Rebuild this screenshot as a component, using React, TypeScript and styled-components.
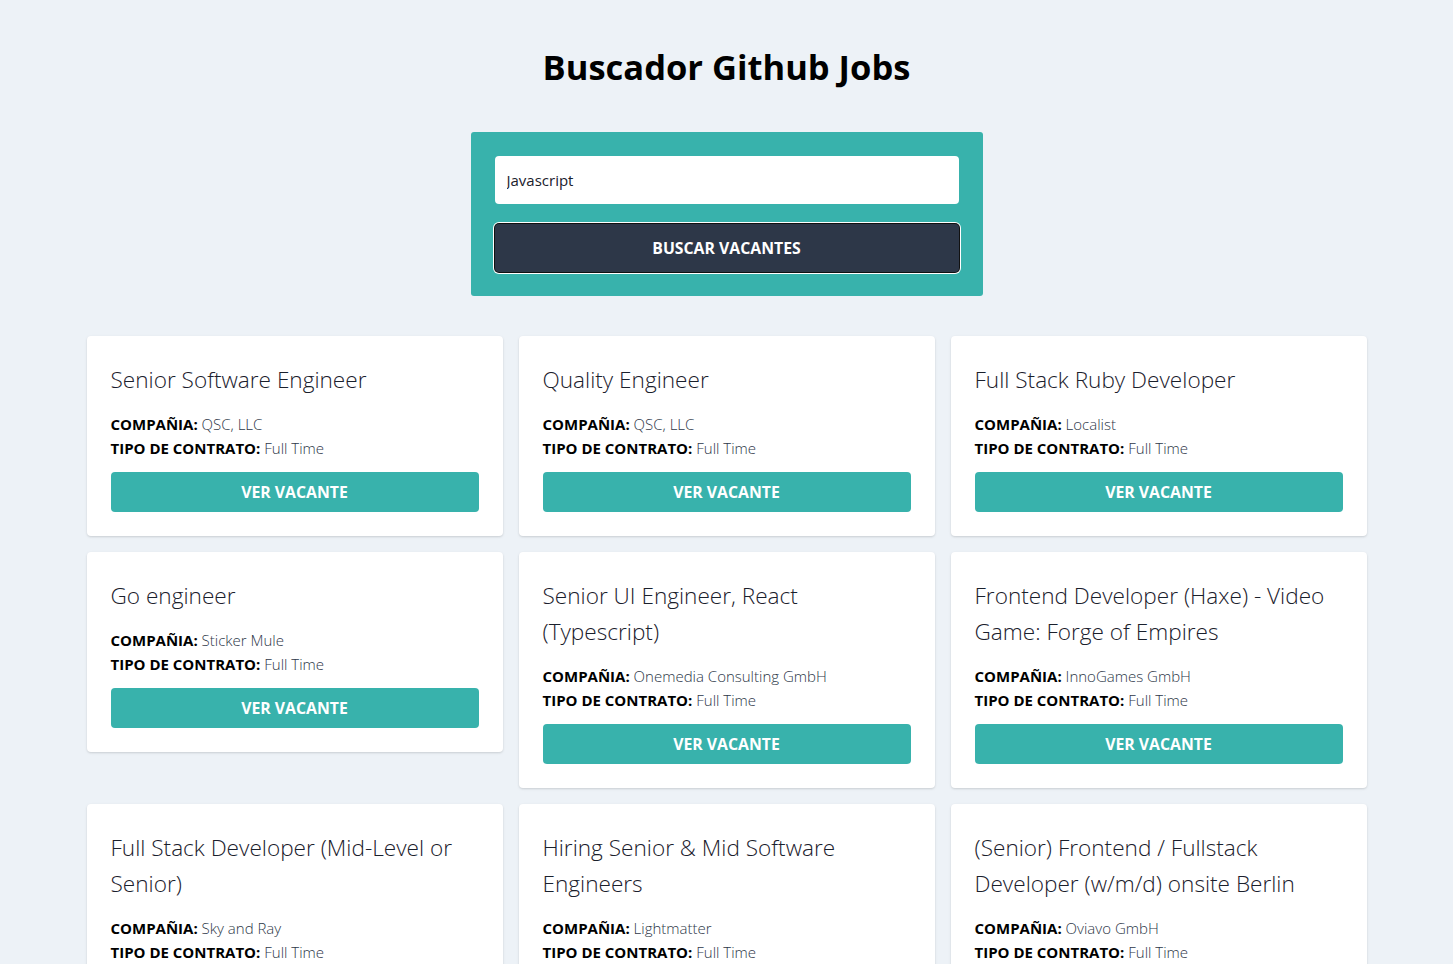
import React from "react";
import styled, { createGlobalStyle } from "styled-components";

const GlobalStyle = createGlobalStyle`
  html, body { margin: 0; padding: 0; }
  body {
    background: #edf2f7;
    font-family: "Open Sans", "Noto Sans", sans-serif;
    color: #000;
  }
  * { box-sizing: border-box; }
`;

const Page = styled.div`
  padding: 44px 0 40px;
`;

const Heading = styled.h1`
  margin: 0;
  text-align: center;
  font-size: 34.5px;
  line-height: 46px;
  font-weight: 700;
  color: #000;
`;

const SearchForm = styled.form`
  width: 512px;
  margin: 42px auto 40px;
  background: #38b2ac;
  border-radius: 3px;
  padding: 24px;
  display: flex;
  flex-direction: column;
  gap: 20px;
`;

const SearchInput = styled.input`
  width: 100%;
  height: 48px;
  border: none;
  border-radius: 4px;
  padding: 0 12px;
  font-family: inherit;
  font-size: 15px;
  color: #1a202c;
  background: #fff;
  outline: none;
`;

const SearchButton = styled.button`
  width: 100%;
  height: 48px;
  border: none;
  border-radius: 4px;
  background: #2d3748;
  color: #fff;
  font-family: inherit;
  font-weight: 700;
  font-size: 15.8px;
  text-transform: uppercase;
  box-shadow: 0 0 0 1px #111, 0 0 0 2px #fff;
  cursor: pointer;
`;

const Grid = styled.div`
  width: 1280px;
  margin: 0 auto;
  display: grid;
  grid-template-columns: repeat(3, 1fr);
  gap: 16px;
  align-items: start;
`;

const Card = styled.div`
  background: #fff;
  border-radius: 4px;
  padding: 24px;
  box-shadow: 0 1px 3px rgba(0, 0, 0, 0.1), 0 1px 2px rgba(0, 0, 0, 0.06);
`;

const JobTitle = styled.h2`
  margin: 0 0 14px;
  padding-top: 2px;
  font-size: 22.6px;
  line-height: 36px;
  font-weight: 300;
  color: #1a202c;
`;

const InfoLine = styled.p`
  margin: 0;
  font-size: 15px;
  line-height: 24px;
  font-weight: 300;
  color: #2d3748;
`;

const Label = styled.span`
  font-weight: 700;
  color: #000;
`;

const ViewButton = styled.button`
  margin-top: 12px;
  width: 100%;
  height: 40px;
  border: none;
  border-radius: 4px;
  background: #38b2ac;
  color: #fff;
  font-family: inherit;
  font-weight: 700;
  font-size: 15.8px;
  text-transform: uppercase;
  cursor: pointer;
`;

const jobs = [
  { title: "Senior Software Engineer", company: "QSC, LLC" },
  { title: "Quality Engineer", company: "QSC, LLC" },
  { title: "Full Stack Ruby Developer", company: "Localist" },
  { title: "Go engineer", company: "Sticker Mule" },
  { title: "Senior UI Engineer, React (Typescript)", company: "Onemedia Consulting GmbH" },
  { title: "Frontend Developer (Haxe) - Video Game: Forge of Empires", company: "InnoGames GmbH" },
  { title: "Full Stack Developer (Mid-Level or Senior)", company: "Sky and Ray" },
  { title: "Hiring Senior & Mid Software Engineers", company: "Lightmatter" },
  { title: "(Senior) Frontend / Fullstack Developer (w/m/d) onsite Berlin", company: "Oviavo GmbH" },
];

export default function App() {
  return (
    <>
      <GlobalStyle />
      <Page>
        <Heading>Buscador Github Jobs</Heading>
        <SearchForm onSubmit={(e) => e.preventDefault()}>
          <SearchInput defaultValue="Javascript" />
          <SearchButton type="submit">Buscar vacantes</SearchButton>
        </SearchForm>
        <Grid>
          {jobs.map((job) => (
            <Card key={job.title}>
              <JobTitle>{job.title}</JobTitle>
              <InfoLine>
                <Label>COMPAÑIA:</Label> {job.company}
              </InfoLine>
              <InfoLine>
                <Label>TIPO DE CONTRATO:</Label> Full Time
              </InfoLine>
              <ViewButton>Ver vacante</ViewButton>
            </Card>
          ))}
        </Grid>
      </Page>
    </>
  );
}
